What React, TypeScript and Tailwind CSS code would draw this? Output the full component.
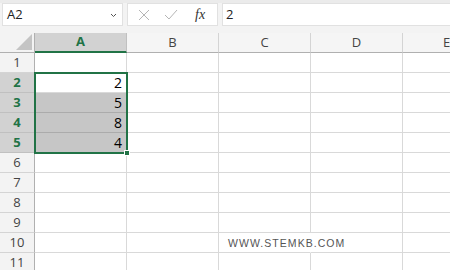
import React from 'react'

const cols = ['A', 'B', 'C', 'D', 'E']
const rows = [1, 2, 3, 4, 5, 6, 7, 8, 9, 10, 11]
const values: Record<number, string> = { 2: '2', 3: '5', 4: '8', 5: '4' }

function isSel(r: number) {
  return r >= 2 && r <= 5
}

export default function App() {
  return (
    <div className="w-[450px] h-[270px] overflow-hidden bg-white font-['Open_Sans',sans-serif] text-[#222]">
      {/* formula bar */}
      <div className="h-[33px] bg-[#f3f3f3] border-t-[3px] border-[#ebebeb] flex items-start pl-[2px] gap-[4px]">
        <div className="w-[121px] h-[23px] bg-white border border-[#e1e1e1] flex items-center justify-between pl-[4px] pr-[5px]">
          <span className="text-[13px] leading-none">A2</span>
          <svg width="7" height="5" viewBox="0 0 7 5" className="mt-[2px]">
            <path d="M1 1 L3.5 3.5 L6 1" fill="none" stroke="#555" strokeWidth="1" />
          </svg>
        </div>
        <div className="w-[91px] h-[23px] bg-white border border-[#e1e1e1] flex items-center pl-[10px]">
          <svg width="12" height="12" viewBox="0 0 12 12">
            <path d="M1 1 L11 11 M11 1 L1 11" stroke="#b5b5b5" strokeWidth="1" />
          </svg>
          <svg width="14" height="12" viewBox="0 0 14 12" className="ml-[14px]">
            <path d="M1 6 L5 10 L13 1" fill="none" stroke="#b5b5b5" strokeWidth="1" />
          </svg>
          <span className="ml-[17px] font-['Liberation_Serif',serif] italic text-[14px] leading-none text-[#333]">fx</span>
        </div>
        <div className="flex-1 h-[23px] bg-white border-y border-l border-[#e1e1e1] flex items-center pl-[3px]">
          <span className="text-[13px] leading-none">2</span>
        </div>
      </div>

      {/* sheet */}
      <div className="relative w-[450px] overflow-hidden">
        <div className="grid w-[491px] grid-cols-[35px_92px_92px_92px_92px_88px]">
          {/* header row */}
          <div className="h-[20px] bg-[#f3f3f3] border-r border-b border-[#b0b0b0] flex items-end justify-end pr-[2px] pb-[2px]">
            <svg width="16" height="16" viewBox="0 0 16 16">
              <path d="M16 0 L16 16 L0 16 Z" fill="#c4c4c4" />
            </svg>
          </div>
          {cols.map((c) => (
            <div
              key={c}
              className={
                c === 'A'
                  ? 'h-[20px] bg-[#d2d2d2] border-b-2 border-[#217346] border-r border-r-[#c0c0c0] flex items-center justify-center text-[13px] font-bold text-[#217346]'
                  : 'h-[20px] bg-[#f5f5f5] border-b border-[#b0b0b0] border-r border-r-[#d4d4d4] flex items-center justify-center text-[13px] text-[#444]'
              }
            >
              {c}
            </div>
          ))}

          {rows.map((r) => (
            <React.Fragment key={r}>
              <div
                className={
                  isSel(r)
                    ? 'h-[20px] bg-[#d2d2d2] border-r border-[#b0b0b0] border-b border-b-[#c0c0c0] flex items-center justify-center text-[13px] font-bold text-[#217346]'
                    : 'h-[20px] bg-[#f3f3f3] border-r border-[#b0b0b0] border-b border-b-[#d4d4d4] flex items-center justify-center text-[13px] text-[#444]'
                }
              >
                {r}
              </div>
              {cols.map((c) =>
                c === 'C' && r === 10 ? (
                  <div
                    key={c}
                    className="h-[20px] bg-white border-b border-[#d9d9d9] border-r border-r-white flex items-center pl-[9px] pt-[2px]"
                  >
                    <span className="relative z-10 whitespace-nowrap text-[10.5px] tracking-[0.1em] text-[#555] font-['Liberation_Sans',sans-serif]">
                      WWW.STEMKB.COM
                    </span>
                  </div>
                ) : (
                  <div
                    key={c}
                    className={
                      c === 'A' && r >= 3 && r <= 5
                        ? 'h-[20px] bg-[#c6c6c6] border-r border-b border-[#ababab] flex items-center justify-end pr-[4px] text-[14px] text-black'
                        : 'h-[20px] bg-white border-r border-b border-[#d9d9d9] flex items-center justify-end pr-[4px] text-[14px] text-black'
                    }
                  >
                    {c === 'A' ? values[r] : ''}
                  </div>
                )
              )}
            </React.Fragment>
          ))}
        </div>

        {/* selection border */}
        <div className="absolute left-[34px] top-[39px] w-[94px] h-[82px] border-2 border-[#217346] pointer-events-none" />
        <div className="absolute left-[124px] top-[117px] w-[6px] h-[6px] bg-[#217346] border border-white pointer-events-none" />
      </div>
    </div>
  )
}
